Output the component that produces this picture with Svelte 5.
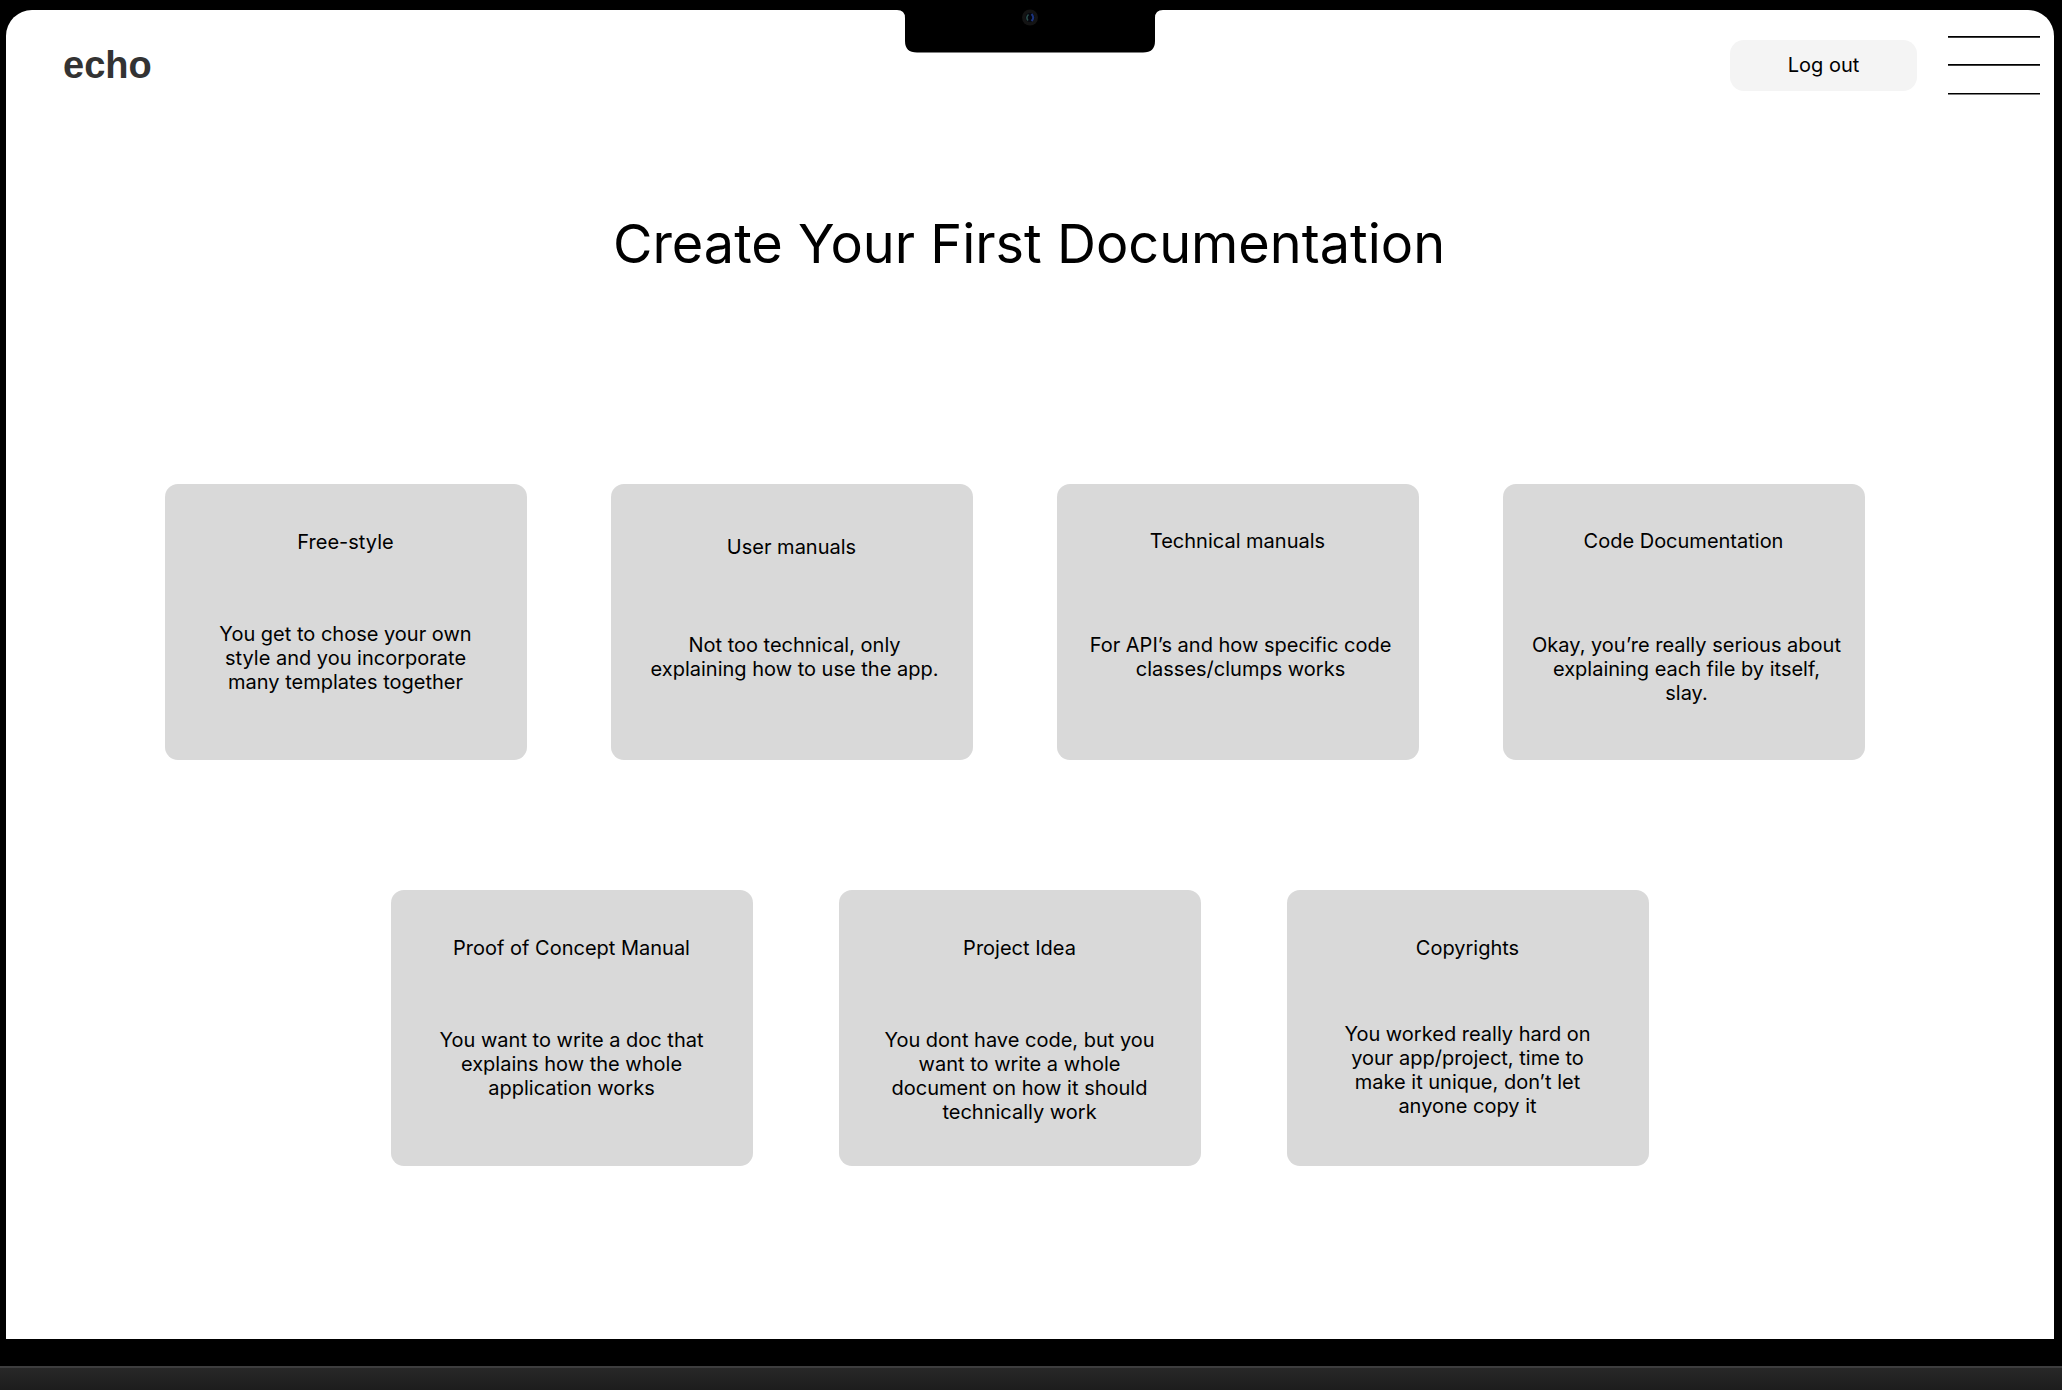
<script>
  const rows = [
    {
      name: 'upper',
      cards: [
        { title: 'Free-style', text: 'You get to chose your own style and you incorporate many templates together', variant: '' },
        { title: 'User manuals', text: 'Not too technical, only explaining how to use the app.', variant: 'wide lowered' },
        { title: 'Technical manuals', text: 'For API’s and how specific code classes/clumps works', variant: 'wide' },
        { title: 'Code Documentation', text: 'Okay, you’re really serious about explaining each file by itself, slay.', variant: 'wide' }
      ]
    },
    {
      name: 'lower',
      cards: [
        { title: 'Proof of Concept Manual', text: 'You want to write a doc that explains how the whole application works', variant: '' },
        { title: 'Project Idea', text: 'You dont have code, but you want to write a whole document on how it should technically work', variant: '' },
        { title: 'Copyrights', text: 'You worked really hard on your app/project, time to make it unique, don’t let anyone copy it', variant: 'snug' }
      ]
    }
  ];
</script>

<div class="laptop">
  <svg class="notch" width="266" height="53" viewBox="0 0 266 53" aria-hidden="true">
    <path d="M0 0H266V10Q258 10 258 18V41Q258 52.500 246 52.500H20Q8 52.500 8 41V18Q8 10 0 10Z" fill="#000" />
    <circle cx="133" cy="17.500" r="8" fill="#141414" />
    <circle cx="133" cy="17.500" r="4.500" fill="#05070f" />
    <path d="M131.500 14.500Q128.500 17.500 131 20.500" stroke="#2d504c" stroke-width="1.500" fill="none" />
    <path d="M134.500 14Q138 17.500 134.500 21" stroke="#1c357f" stroke-width="2" fill="none" />
  </svg>

  <div class="screen">
    <header>
      <a class="logo" href="/">echo</a>
      <div class="actions">
        <button class="logout" type="button">Log out</button>
        <button class="menu" type="button" aria-label="Menu">
          <svg width="92" height="60" viewBox="0 0 92 60" aria-hidden="true">
            <path d="M0 1.900H92M0 29.900H92M0 58.800H92" stroke="#000" stroke-width="1.600" />
          </svg>
        </button>
      </div>
    </header>

    <main>
      <h1>Create Your First Documentation</h1>
      {#each rows as row}
        <div class="row {row.name}">
          {#each row.cards as card}
            <a class="card {card.variant}" href="#{card.title.toLowerCase().replaceAll(' ', '-')}">
              <h2>{card.title}</h2>
              <p>{card.text}</p>
            </a>
          {/each}
        </div>
      {/each}
    </main>
  </div>
  <div class="base"></div>
</div>

<style>
  :global(body) {
    margin: 0;
    background: #000;
  }

  .laptop {
    box-sizing: border-box;
    position: relative;
    display: flex;
    flex-direction: column;
    min-height: 100vh;
    padding-top: 10px;
    background: #000;
    color: #000;
    font-family: Inter, 'Liberation Sans', sans-serif;
    font-size: 20px;
    line-height: 24px;
  }

  .notch {
    position: absolute;
    top: 0;
    left: 50%;
    margin-left: -134px;
  }

  .screen {
    flex: 1;
    margin: 0 8px 27px 6px;
    border-radius: 26px 26px 0 0;
    background: #fff;
  }

  .base {
    box-sizing: border-box;
    height: 24px;
    border-top: 2px solid #3d3d3e;
    background: linear-gradient(#282828, #1d1d1d);
  }

  header {
    display: flex;
    align-items: center;
    justify-content: space-between;
    padding: 25px 14px 0 57px;
  }

  .logo {
    color: #333;
    font-family: 'Liberation Sans', Arial, sans-serif;
    font-size: 38px;
    font-weight: 700;
    line-height: 44px;
    text-decoration: none;
  }

  .actions {
    display: flex;
    align-items: center;
    gap: 31px;
  }

  button {
    border: 0;
    padding: 0;
    color: inherit;
    font: inherit;
    cursor: pointer;
  }

  .logout {
    width: 187px;
    height: 51px;
    border-radius: 14px;
    background: #f4f4f4;
  }

  .menu {
    display: flex;
    background: none;
  }

  h1 {
    margin: 0;
    padding: 116px 2px 0 0;
    font-size: 54px;
    font-weight: 400;
    line-height: 66px;
    text-align: center;
  }

  .row {
    display: flex;
    flex-wrap: wrap;
    justify-content: center;
  }

  .upper {
    gap: 84px;
    padding: 207px 31px 0 0;
  }

  .lower {
    gap: 86px;
    padding: 130px 21px 0 0;
  }

  .card {
    box-sizing: border-box;
    display: grid;
    grid-template-rows: 92px auto;
    justify-items: center;
    align-content: start;
    width: 362px;
    min-height: 276px;
    padding-top: 46px;
    border-radius: 13px;
    background: #d9d9d9;
    color: inherit;
    text-align: center;
    text-decoration: none;
  }

  .wide {
    grid-template-rows: 104px auto;
    padding-top: 45px;
  }

  .lowered {
    grid-template-rows: 98px auto;
    padding-top: 51px;
  }

  .snug {
    grid-template-rows: 86px auto;
  }

  h2,
  p {
    margin: 0;
    font-size: 20px;
    font-weight: 400;
  }

  p {
    width: 280px;
  }

  .wide p {
    width: 312px;
    padding-left: 6px;
  }
</style>
